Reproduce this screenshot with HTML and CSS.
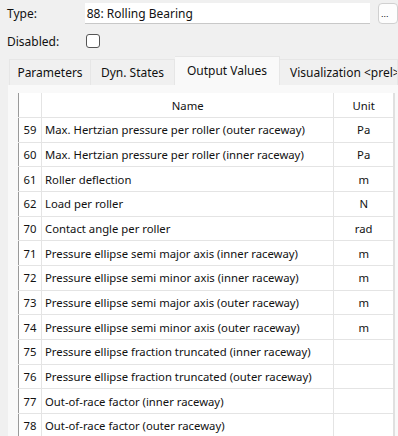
FILE: index.html
```html
<!DOCTYPE html>
<html lang="en">
<head>
    <meta charset="UTF-8">
    <title>Rolling Bearing - Output Values</title>
    <link rel="stylesheet" href="styles.css">
</head>
<body>
    <div class="form-row">
        <span class="label">Type:</span>
        <div class="type-field">88: Rolling Bearing</div>
        <button class="dots">...</button>
    </div>
    <div class="form-row disabled-row">
        <span class="label">Disabled:</span>
        <span class="checkbox"></span>
    </div>

    <div class="tabs">
        <div class="tab tab-params">Parameters</div>
        <div class="tab tab-dyn">Dyn. States</div>
        <div class="tab tab-out active">Output Values</div>
        <div class="tab tab-vis">Visualization &lt;prel&gt;</div>
    </div>

    <div class="panel">
        <table class="grid">
            <colgroup>
                <col class="col-num">
                <col class="col-name">
                <col class="col-unit">
            </colgroup>
            <thead>
                <tr><th></th><th>Name</th><th>Unit</th></tr>
            </thead>
            <tbody>
                <tr><td class="num">59</td><td>Max. Hertzian pressure per roller (outer raceway)</td><td class="unit">Pa</td></tr>
                <tr><td class="num">60</td><td>Max. Hertzian pressure per roller (inner raceway)</td><td class="unit">Pa</td></tr>
                <tr><td class="num">61</td><td>Roller deflection</td><td class="unit">m</td></tr>
                <tr><td class="num">62</td><td>Load per roller</td><td class="unit">N</td></tr>
                <tr><td class="num">70</td><td>Contact angle per roller</td><td class="unit">rad</td></tr>
                <tr><td class="num">71</td><td>Pressure ellipse semi major axis (inner raceway)</td><td class="unit">m</td></tr>
                <tr><td class="num">72</td><td>Pressure ellipse semi minor axis (inner raceway)</td><td class="unit">m</td></tr>
                <tr><td class="num">73</td><td>Pressure ellipse semi major axis (outer raceway)</td><td class="unit">m</td></tr>
                <tr><td class="num">74</td><td>Pressure ellipse semi minor axis (outer raceway)</td><td class="unit">m</td></tr>
                <tr><td class="num">75</td><td>Pressure ellipse fraction truncated (inner raceway)</td><td class="unit"></td></tr>
                <tr><td class="num">76</td><td>Pressure ellipse fraction truncated (outer raceway)</td><td class="unit"></td></tr>
                <tr><td class="num">77</td><td>Out-of-race factor (inner raceway)</td><td class="unit"></td></tr>
                <tr><td class="num">78</td><td>Out-of-race factor (outer raceway)</td><td class="unit"></td></tr>
            </tbody>
        </table>
    </div>
</body>
</html>
```

FILE: styles.css
```css
body {
    margin: 0;
    background: #f0f0f0;
    font-family: "Noto Sans", "Open Sans", sans-serif;
    font-size: 11.3px;
    color: #111;
    overflow: hidden;
    width: 398px;
    height: 436px;
}
.form-row {
    display: flex;
    align-items: center;
    height: 21px;
    margin-top: 3px;
}
.label {
    width: 79px;
    padding-left: 7px;
    font-size: 12px;
}
.type-field {
    width: 290px;
    height: 21px;
    line-height: 21px;
    background: #fff;
    border-bottom: 1px solid #c8c8c8;
    padding-left: 2px;
    box-sizing: border-box;
    font-size: 12px;
}
.dots {
    flex: none;
    margin-left: 8px;
    width: 20px;
    height: 21px;
    border: 1px solid #d0d0d0;
    border-radius: 4px;
    background: #fdfdfd;
    font-size: 9px;
    padding: 0 0 0 2px;
    text-align: left;
}
.disabled-row {
    margin-top: 5px;
    height: 24px;
}
.checkbox {
    width: 12px;
    height: 12px;
    border: 1px solid #555;
    border-radius: 3px;
    background: #fff;
}
.tabs {
    display: flex;
    align-items: flex-end;
    margin-top: 3px;
    padding-left: 9px;
    height: 29px;
}
.tab {
    flex: none;
    height: 26px;
    line-height: 25px;
    box-sizing: border-box;
    border-top: 1px solid #e6e6e6;
    border-right: 1px solid #e6e6e6;
    background: #f0f0f0;
    white-space: nowrap;
    text-align: center;
    font-size: 12px;
}
.tab-params {
    width: 82px;
    border-left: 1px solid #e6e6e6;
}
.tab-dyn { width: 84px; }
.tab-out { width: 105px; }
.tab-vis {
    width: 118px;
    text-align: left;
    padding-left: 10px;
    overflow: hidden;
}
.tab.active {
    height: 29px;
    background: #f9f9f9;
    line-height: 27px;
}
.panel {
    background: #f9f9f9;
    margin-left: 8px;
    padding: 8px 0 0 10px;
    height: 400px;
}
.grid {
    border-collapse: collapse;
    background: #fff;
    border-left: 1px solid #9a9a9a;
    border-right: 2px solid #e0e0e0;
    width: 377px;
    table-layout: fixed;
}
.col-num { width: 23px; }
.col-name { width: 292px; }
.col-unit { width: 60px; }
.grid th,
.grid td {
    height: 23.67px;
    padding: 0 3px;
    border-bottom: 1px solid #e4e4e4;
    border-right: 1px solid #e4e4e4;
    font-weight: normal;
    white-space: nowrap;
    overflow: hidden;
    font-size: 11.3px;
}
.grid th {
    height: 24px;
    text-align: center;
}
.grid td.num {
    text-align: center;
    padding: 0;
}
.grid .unit {
    text-align: center;
}
```
